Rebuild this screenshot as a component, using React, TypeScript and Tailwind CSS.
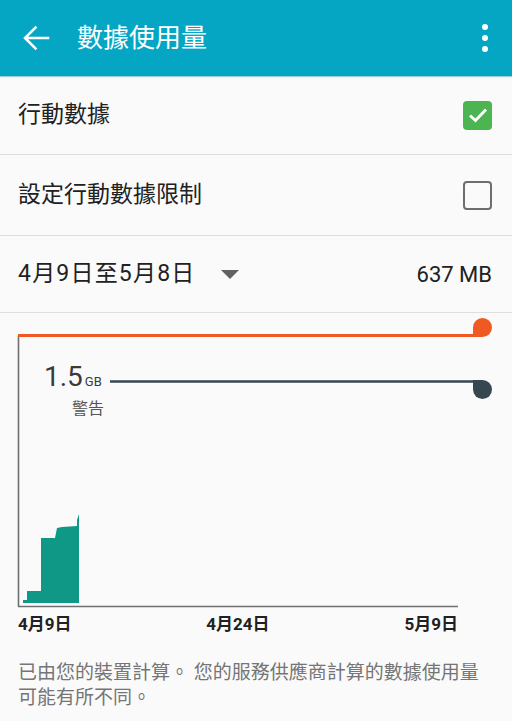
const FONT = { fontFamily: 'Roboto, "Noto Sans CJK TC", sans-serif' };

function Row({ children, className = "" }: { children: React.ReactNode; className?: string }) {
  return (
    <div className={`flex items-center justify-between pl-[18px] pr-[20px] border-b border-[#dedede] ${className}`}>
      {children}
    </div>
  );
}

export default function App() {
  return (
    <div className="w-[512px] h-[721px] bg-[#fafafa] overflow-hidden text-[#212121]" style={FONT}>
      {/* 頂部欄 */}
      <div className="h-[76px] bg-[#04a6c4] flex items-center pl-[22px] pr-[24px] shadow-[0_1px_1px_rgba(0,120,150,0.35)]">
        <svg width="28" height="26" viewBox="0 0 28 26" className="shrink-0">
          <path d="M26 13H3.5M13.5 2.5L3 13l10.5 10.5" stroke="#fff" strokeWidth="2.6" fill="none" strokeLinecap="square" />
        </svg>
        <div className="ml-[27px] text-[26px] text-white leading-none">數據使用量</div>
        <div className="ml-auto flex flex-col gap-[5px]">
          <span className="block w-[6px] h-[6px] rounded-full bg-white" />
          <span className="block w-[6px] h-[6px] rounded-full bg-white" />
          <span className="block w-[6px] h-[6px] rounded-full bg-white" />
        </div>
      </div>

      <Row className="h-[79px]">
        <span className="text-[23px]">行動數據</span>
        <span className="w-[29px] h-[29px] rounded-[4px] bg-[#4cb552] flex items-center justify-center">
          <svg width="20" height="16" viewBox="0 0 20 16">
            <path d="M2 8.5l5.5 5L18 2.5" stroke="#fff" strokeWidth="2.8" fill="none" />
          </svg>
        </span>
      </Row>
      <Row className="h-[81px]">
        <span className="text-[23px]">設定行動數據限制</span>
        <span className="w-[29px] h-[29px] rounded-[4px] border-[2.5px] border-[#6e6e6e]" />
      </Row>
      <Row className="h-[77px] pr-[20px]">
        <div className="flex items-center">
          <span className="text-[23px] tracking-[1.2px]">4月9日至5月8日</span>
          <svg width="18" height="9" viewBox="0 0 18 9" className="ml-[25px]">
            <path d="M0 0h18L9 9z" fill="#616161" />
          </svg>
        </div>
        <span className="text-[22px]">637 MB</span>
      </Row>

      {/* 圖表 */}
      <div className="relative h-[298px]">
        <svg width="512" height="298" viewBox="0 0 512 298" className="block">
          <line x1="18.5" y1="23" x2="18.5" y2="293.5" stroke="#6f6f6f" strokeWidth="1.6" />
          <line x1="18" y1="293.5" x2="458" y2="293.5" stroke="#6f6f6f" strokeWidth="1.6" />
          <polygon
            points="23,290 23,287 27,287 27,278 41,278 41,225 55,225 57,215 62,214 77,213 77,207 79,201 79,290"
            fill="#0f9886"
          />
          <line x1="18" y1="22.5" x2="476" y2="22.5" stroke="#f05a22" strokeWidth="3" />
          <path d="M473,24 L473,14.5 A9.5,9.5 0 1 1 482.5,24 Z" fill="#f05a22" />
          <line x1="110" y1="68.5" x2="476" y2="68.5" stroke="#37474f" strokeWidth="2.6" />
          <path d="M473,67 L482.5,67 A9.5,9.5 0 1 1 473,76.5 Z" fill="#37474f" />
        </svg>
        <div className="absolute left-[44px] top-[50px] flex items-baseline text-[#3a3a3a]">
          <span className="text-[28px] leading-none">1.5</span>
          <span className="text-[13px] leading-none ml-[2px]">GB</span>
        </div>
        <div className="absolute left-[72px] top-[88px] text-[16px] leading-none text-[#555]">警告</div>
      </div>

      <div className="w-[440px] ml-[18px] flex justify-between text-[17px] font-bold leading-none mt-[5px]">
        <span>4月9日</span>
        <span>4月24日</span>
        <span>5月9日</span>
      </div>

      <p className="mt-[27px] px-[18px] text-[19px] leading-[25px] text-[#757575]">
        已由您的裝置計算。 您的服務供應商計算的數據使用量可能有所不同。
      </p>
    </div>
  );
}
